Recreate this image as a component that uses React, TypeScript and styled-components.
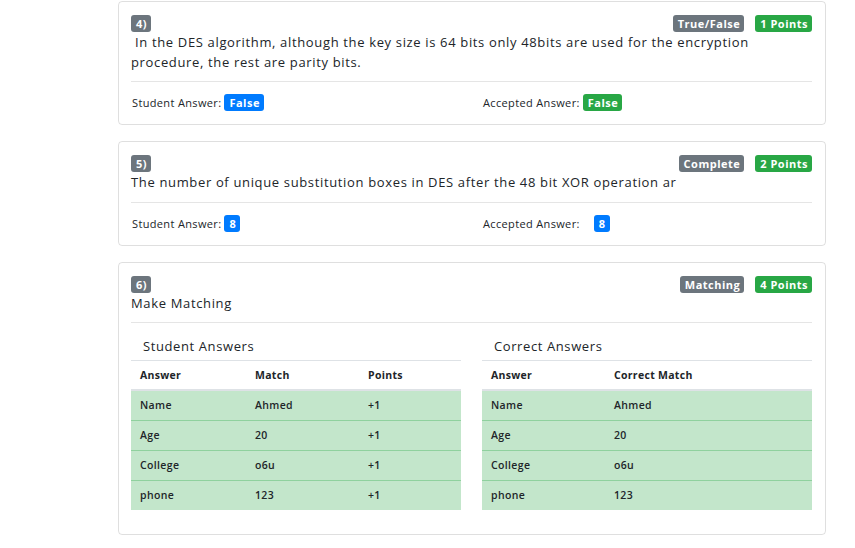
import React from "react";
import styled, { createGlobalStyle } from "styled-components";

const GlobalStyle = createGlobalStyle`
  html, body { margin: 0; padding: 0; background: #fff; }
  body {
    font-family: "Open Sans", "Noto Sans", sans-serif;
    color: #212529;
    -webkit-font-smoothing: antialiased;
  }
  * { box-sizing: border-box; }
`;

const Page = styled.div`
  width: 708px;
  margin-left: 118px;
  padding-top: 1px;
  display: flex;
  flex-direction: column;
  gap: 16px;
`;

const Card = styled.section`
  border: 1px solid rgba(0, 0, 0, 0.125);
  border-radius: 4px;
  padding: 13px 13px 13px 12px;
  display: flex;
  flex-direction: column;
`;

const Header = styled.div`
  display: flex;
  align-items: center;
  justify-content: space-between;
  height: 17px;
`;

const BadgeGroup = styled.div`
  display: flex;
  gap: 11px;
`;

const Badge = styled.span<{ $tone: "secondary" | "success" | "primary" }>`
  display: inline-flex;
  align-items: center;
  justify-content: center;
  height: 17px;
  padding: 0 4px 0 5px;
  border-radius: 3px;
  font-size: 11px;
  font-weight: 700;
  letter-spacing: 0.5px;
  color: #fff;
  line-height: 1;
  background: ${(p) =>
    p.$tone === "secondary" ? "#6c757d" : p.$tone === "success" ? "#28a745" : "#007bff"};
`;

const Question = styled.p`
  margin: 0;
  padding-top: 1px;
  font-size: 13px;
  line-height: 19.5px;
  letter-spacing: 0.65px;
  white-space: pre-wrap;
`;

const Rule = styled.hr`
  margin: 9px 0 12px;
  border: 0;
  border-top: 1px solid rgba(0, 0, 0, 0.1);
`;

const AnswerRow = styled.div`
  display: grid;
  grid-template-columns: 351px 1fr;
  height: 17px;
`;

const AnswerItem = styled.div`
  display: flex;
  align-items: center;
  gap: 3px;
  font-size: 11px;
  letter-spacing: 0.35px;
  padding-left: 1px;
`;

const Spacer = styled.span<{ $w: number }>`
  display: inline-block;
  width: ${(p) => p.$w}px;
`;

const Tables = styled.div`
  display: grid;
  grid-template-columns: 330px 330px;
  justify-content: space-between;
  margin-bottom: 11px;
`;

const Table = styled.table`
  width: 100%;
  border-collapse: collapse;
  table-layout: fixed;
`;

const Col = styled.col<{ $w?: number }>`
  width: ${(p) => (p.$w ? `${p.$w}px` : "auto")};
`;

const Caption = styled.th`
  text-align: left;
  font-size: 13px;
  font-weight: 500;
  letter-spacing: 0.6px;
  line-height: 19.5px;
  padding: 2px 11px 3px 12px;
  border-bottom: 1px solid #dee2e6;
`;

const HeadCell = styled.th`
  text-align: left;
  font-size: 10.5px;
  font-weight: 700;
  letter-spacing: 0.3px;
  height: 30px;
  padding: 0 9px;
  border-bottom: 2px solid #dee2e6;
`;

const Row = styled.tr`
  background: #c3e6cb;
  & + & td { border-top: 1px solid #8fd19e; }
`;

const Cell = styled.td`
  font-size: 10.5px;
  font-weight: 600;
  letter-spacing: 0.35px;
  height: 30px;
  padding: 0 9px;
`;

type Pair = [string, string];
const matches: Pair[] = [
  ["Name", "Ahmed"],
  ["Age", "20"],
  ["College", "o6u"],
  ["phone", "123"],
];

function QuestionHeader({ num, type, points }: { num: string; type: string; points: string }) {
  return (
    <Header>
      <Badge $tone="secondary">{num}</Badge>
      <BadgeGroup>
        <Badge $tone="secondary">{type}</Badge>
        <Badge $tone="success">{points}</Badge>
      </BadgeGroup>
    </Header>
  );
}

export default function App() {
  return (
    <>
      <GlobalStyle />
      <Page>
        <Card>
          <QuestionHeader num="4)" type="True/False" points="1 Points" />
          <Question>
            {" In the DES algorithm, although the key size is 64 bits only 48bits are used for the encryption procedure, the rest are parity bits."}
          </Question>
          <Rule />
          <AnswerRow>
            <AnswerItem>
              Student Answer: <Badge $tone="primary">False</Badge>
            </AnswerItem>
            <AnswerItem>
              Accepted Answer: <Badge $tone="success">False</Badge>
            </AnswerItem>
          </AnswerRow>
        </Card>

        <Card>
          <QuestionHeader num="5)" type="Complete" points="2 Points" />
          <Question>The number of unique substitution boxes in DES after the 48 bit XOR operation ar</Question>
          <Rule />
          <AnswerRow>
            <AnswerItem>
              Student Answer: <Badge $tone="primary">8</Badge>
            </AnswerItem>
            <AnswerItem>
              Accepted Answer: <Spacer $w={8} />
              <Badge $tone="primary">8</Badge>
            </AnswerItem>
          </AnswerRow>
        </Card>

        <Card>
          <QuestionHeader num="6)" type="Matching" points="4 Points" />
          <Question>Make Matching</Question>
          <Rule />
          <Tables>
            <Table>
              <colgroup>
                <Col $w={115} />
                <Col $w={113} />
                <Col />
              </colgroup>
              <thead>
                <tr>
                  <Caption colSpan={3}>Student Answers</Caption>
                </tr>
                <tr>
                  <HeadCell>Answer</HeadCell>
                  <HeadCell>Match</HeadCell>
                  <HeadCell>Points</HeadCell>
                </tr>
              </thead>
              <tbody>
                {matches.map(([a, m]) => (
                  <Row key={a}>
                    <Cell>{a}</Cell>
                    <Cell>{m}</Cell>
                    <Cell>+1</Cell>
                  </Row>
                ))}
              </tbody>
            </Table>
            <Table>
              <colgroup>
                <Col $w={123} />
                <Col />
              </colgroup>
              <thead>
                <tr>
                  <Caption colSpan={2}>Correct Answers</Caption>
                </tr>
                <tr>
                  <HeadCell>Answer</HeadCell>
                  <HeadCell>Correct Match</HeadCell>
                </tr>
              </thead>
              <tbody>
                {matches.map(([a, m]) => (
                  <Row key={a}>
                    <Cell>{a}</Cell>
                    <Cell>{m}</Cell>
                  </Row>
                ))}
              </tbody>
            </Table>
          </Tables>
        </Card>
      </Page>
    </>
  );
}
